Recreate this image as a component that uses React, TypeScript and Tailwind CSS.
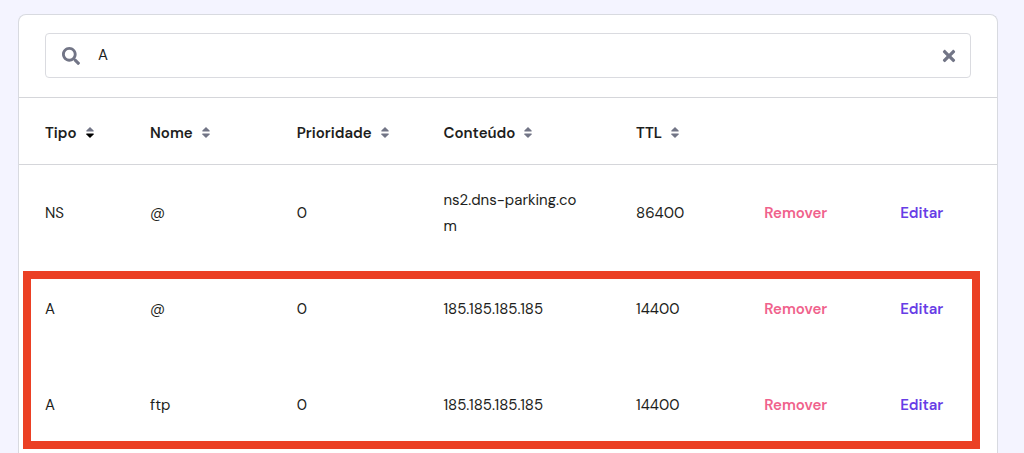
import React from 'react';
import { FaSearch, FaTimes } from 'react-icons/fa';

interface DnsRecord {
  type: string;
  name: string;
  priority: number;
  content: string;
  ttl: number;
}

interface SortIconProps {
  active?: boolean;
}

const records: DnsRecord[] = [
  { type: 'NS', name: '@', priority: 0, content: 'ns2.dns-parking.com', ttl: 86400 },
  { type: 'A', name: '@', priority: 0, content: '185.185.185.185', ttl: 14400 },
  { type: 'A', name: 'ftp', priority: 0, content: '185.185.185.185', ttl: 14400 },
];

const columns = [
  { label: 'Tipo', className: 'w-[13.4%] pl-[26px]' },
  { label: 'Nome', className: 'w-[15%]' },
  { label: 'Prioridade', className: 'w-[15%]' },
  { label: 'Conteúdo', className: 'w-[19.7%]' },
  { label: 'TTL', className: 'w-[13.1%]' },
];

const SortIcon: React.FC<SortIconProps> = ({ active }) => (
  <svg viewBox="0 0 8 11" className="w-2 h-[11px]" aria-hidden="true">
    <path d="M4 0 L7.6 3.6 Q8 4.6 7.3 4.6 H0.7 Q0 4.6 0.4 3.6 Z" fill="#727586" />
    <path
      d="M4 11 L7.6 7.4 Q8 6.4 7.3 6.4 H0.7 Q0 6.4 0.4 7.4 Z"
      fill={active ? '#000000' : '#727586'}
    />
  </svg>
);

const App: React.FC = () => {
  return (
    <main
      className="min-h-screen bg-[#f4f4ff] pt-[14px] pl-[18px] pr-[26px] text-[15px] text-[#1d1e20]"
      style={{ fontFamily: '"DM Sans", Inter, sans-serif' }}
    >
      <section className="bg-white border border-b-0 border-[#d8dae0] rounded-t-lg pb-px">
        <div className="px-[26px] pt-[18px] pb-[19px] border-b border-[#d5d6da]">
          <div className="flex items-center h-[45px] px-4 border border-[#dadbe0] rounded">
            <FaSearch className="size-[18px] shrink-0 text-[#727586]" aria-hidden="true" />
            <input
              type="text"
              aria-label="Pesquisar"
              defaultValue="A"
              className="flex-1 min-w-0 mx-[18px] bg-transparent outline-none"
            />
            <button type="button" aria-label="Limpar pesquisa" className="text-[#727586]">
              <FaTimes className="size-[18px] -mr-1" />
            </button>
          </div>
        </div>

        <div className="relative">
          <table className="w-full table-fixed text-left">
            <thead>
              <tr className="h-[66px] border-b border-[#d5d6da]">
                {columns.map((column) => (
                  <th key={column.label} className={`pt-1 font-semibold ${column.className}`}>
                    <button type="button" className="flex items-center gap-[9px]">
                      {column.label}
                      <SortIcon active={column.label === 'Tipo'} />
                    </button>
                  </th>
                ))}
                <td className="w-[13.9%]" />
                <td />
              </tr>
            </thead>
            <tbody>
              {records.map((record) => (
                <tr key={`${record.type}-${record.name}`} className="h-24 leading-[26px] *:pt-0.5">
                  <td className="pl-[26px]">{record.type}</td>
                  <td>{record.name}</td>
                  <td>{record.priority}</td>
                  <td className="pr-[54px] break-all">{record.content}</td>
                  <td>{record.ttl}</td>
                  <td>
                    <button type="button" className="font-semibold text-[#f0628c]">
                      Remover
                    </button>
                  </td>
                  <td>
                    <button type="button" className="font-semibold text-[#673de6]">
                      Editar
                    </button>
                  </td>
                </tr>
              ))}
            </tbody>
          </table>
          {/* Highlight around the two A records */}
          <div className="absolute bottom-[3px] left-1 right-[17px] h-[178px] border-8 border-[#eb4024] pointer-events-none" />
        </div>
      </section>
    </main>
  );
};

export default App;
